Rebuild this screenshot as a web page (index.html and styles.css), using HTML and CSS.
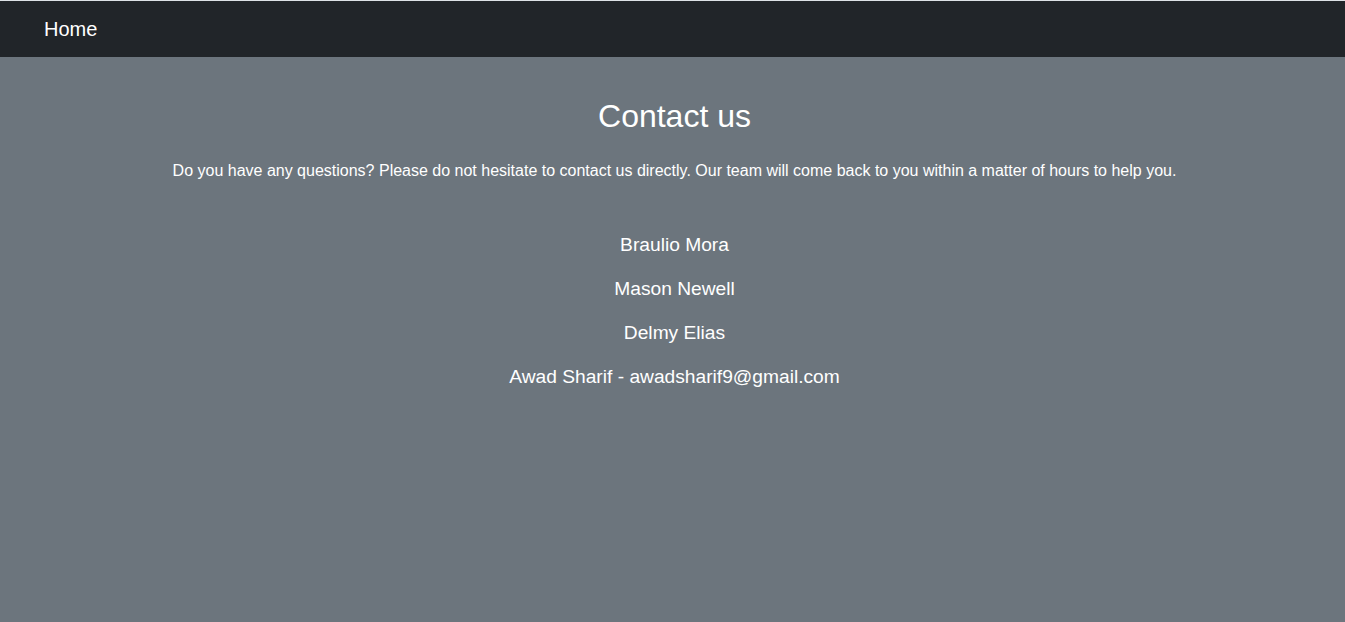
FILE: index.html
```html
<!DOCTYPE html>
<html lang="en">
<head>
<meta charset="utf-8">
<title>Contact us</title>
<link rel="stylesheet" href="styles.css">
</head>
<body>
<div class="topline"></div>
<nav class="navbar">
  <a class="brand" href="#">Home</a>
</nav>
<main class="content">
  <h1 class="title">Contact us</h1>
  <p class="intro">Do you have any questions? Please do not hesitate to contact us directly. Our team will come back to you within a matter of hours to help you.</p>
  <ul class="people">
    <li>Braulio Mora</li>
    <li>Mason Newell</li>
    <li>Delmy Elias</li>
    <li>Awad Sharif - awadsharif9@gmail.com</li>
  </ul>
</main>
</body>
</html>
```
FILE: styles.css
```css
html, body {
  margin: 0;
  padding: 0;
  height: 100%;
}
body {
  background: #6c757d;
  font-family: "Liberation Sans", Arial, sans-serif;
  color: #fff;
  display: flex;
  flex-direction: column;
}
.topline {
  height: 1px;
  background: #dee2e6;
}
.navbar {
  background: #212529;
  height: 56px;
  display: flex;
  align-items: center;
  padding: 0 44px;
}
.brand {
  color: #fff;
  text-decoration: none;
  font-size: 20px;
  line-height: 24px;
}
.content {
  display: flex;
  flex-direction: column;
  align-items: center;
  text-align: center;
  padding-top: 38px;
  padding-left: 4px;
}
.title {
  margin: 0;
  font-weight: 400;
  font-size: 32px;
  line-height: 42px;
}
.intro {
  margin: 22px 0 0;
  font-size: 16px;
  line-height: 24px;
}
.people {
  list-style: none;
  margin: 50px 0 0;
  padding: 0;
  display: flex;
  flex-direction: column;
  align-items: center;
  gap: 20px;
}
.people li {
  font-size: 19.2px;
  line-height: 24px;
}
```
